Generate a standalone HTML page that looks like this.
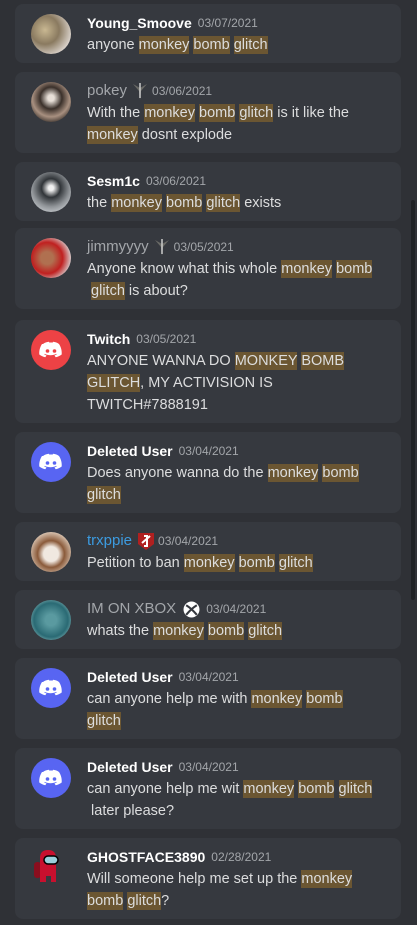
<!DOCTYPE html>
<html><head><meta charset="utf-8"><style>
*{margin:0;padding:0;box-sizing:border-box}
body{width:417px;height:925px;background:#2f3136;font-family:"Liberation Sans",sans-serif;position:relative;overflow:hidden}
.card{position:absolute;left:15px;width:386px;background:#36393f;border-radius:8px;padding:8px 0 7px 72px}
.av{position:absolute;left:16px;top:10px;width:40px;height:40px;border-radius:50%;overflow:hidden}
.hd{line-height:22px;height:22px;white-space:nowrap;display:flex;align-items:center}
.n{font-size:14px;font-weight:bold;color:#fff}
.g{color:#a3a6aa;font-weight:normal;font-size:15px}
.b{color:#3c9be0;font-weight:normal;font-size:15px}
.d{font-size:12px;color:#a3a6aa;margin-left:6px}
.m{font-size:14.5px;line-height:22px;color:#dcddde;white-space:nowrap}
.h{background:#6b5632;padding:1px 0}
.bd{margin-left:5px;display:inline-block}
.sb{position:absolute;left:411px;top:200px;width:4px;height:400px;background:#202225;border-radius:2px}
</style></head><body>
<div class="sb"></div>

<div class="card" style="top:4px;height:59px">
<div class="av" style="background:radial-gradient(circle at 35% 40%,#c9b892,#8a7a60 40%,#d8d0c8 75%)"></div>
<div class="hd"><span class="n">Young_Smoove</span><span class="d">03/07/2021</span></div>
<div class="m">anyone <span class="h">monkey</span> <span class="h">bomb</span> <span class="h">glitch</span></div></div>

<div class="card" style="top:72px;height:81px">
<div class="av" style="background:radial-gradient(circle at 50% 40%,#e8e0d8 10%,#3a302a 35%,#a89080 60%,#2a2420 85%)"></div>
<div class="hd"><span class="n g">pokey</span><svg class="bd" width="16" height="18" viewBox="0 0 16 18"><path d="M1 2L8 6 15 2 9 9 8 18 7 9Z" fill="#6a6a66"/><path d="M8 1V16" stroke="#ccc" stroke-width="1.5"/></svg><span class="d" style="margin-left:4px">03/06/2021</span></div>
<div class="m">With the <span class="h">monkey</span> <span class="h">bomb</span> <span class="h">glitch</span> is it like the<br><span class="h">monkey</span> dosnt explode</div></div>

<div class="card" style="top:162px;height:59px">
<div class="av" style="background:radial-gradient(circle at 50% 40%,#f0f0f0 8%,#303438 30%,#909498 60%,#c8ccd0 85%)"></div>
<div class="hd"><span class="n">Sesm1c</span><span class="d">03/06/2021</span></div>
<div class="m">the <span class="h">monkey</span> <span class="h">bomb</span> <span class="h">glitch</span> exists</div></div>

<div class="card" style="top:228px;height:81px">
<div class="av" style="background:radial-gradient(circle at 40% 50%,#b07050 20%,#c02020 50%,#d8d8d8 80%)"></div>
<div class="hd"><span class="n g">jimmyyyy</span><svg class="bd" width="16" height="18" viewBox="0 0 16 18"><path d="M1 2L8 6 15 2 9 9 8 18 7 9Z" fill="#6a6a66"/><path d="M8 1V16" stroke="#ccc" stroke-width="1.5"/></svg><span class="d" style="margin-left:4px">03/05/2021</span></div>
<div class="m">Anyone know what this whole <span class="h">monkey</span> <span class="h">bomb</span><br>&nbsp;<span class="h">glitch</span> is about?</div></div>

<div class="card" style="top:320px;height:103px">
<div class="av" style="background:#ed4245"><svg width="40" height="40" viewBox="0 0 40 40"><path d="M12 14c2-1.5 4-2 6-2.2l.4.8c1-.2 2.2-.2 3.2 0l.4-.8c2 .2 4 .7 6 2.2 2 3 3 6.5 2.7 10.5-2 1.5-4 2.3-6 2.8l-1.2-1.8c.9-.3 1.7-.7 2.4-1.2-.2-.1-.4-.3-.6-.4-3.8 1.8-7.8 1.8-11.6 0-.2.1-.4.3-.6.4.7.5 1.5.9 2.4 1.2l-1.2 1.8c-2-.5-4-1.3-6-2.8-.3-4 .7-7.5 2.7-10.5z" fill="#fff"/><circle cx="16.5" cy="21" r="1.8" fill="#ed4245"/><circle cx="23.5" cy="21" r="1.8" fill="#ed4245"/></svg></div>
<div class="hd"><span class="n">Twitch</span><span class="d">03/05/2021</span></div>
<div class="m">ANYONE WANNA DO <span class="h">MONKEY</span> <span class="h">BOMB</span><br><span class="h">GLITCH</span>, MY ACTIVISION IS<br>TWITCH#7888191</div></div>

<div class="card" style="top:432px;height:81px">
<div class="av" style="background:#5865f2"><svg width="40" height="40" viewBox="0 0 40 40"><path d="M12 14c2-1.5 4-2 6-2.2l.4.8c1-.2 2.2-.2 3.2 0l.4-.8c2 .2 4 .7 6 2.2 2 3 3 6.5 2.7 10.5-2 1.5-4 2.3-6 2.8l-1.2-1.8c.9-.3 1.7-.7 2.4-1.2-.2-.1-.4-.3-.6-.4-3.8 1.8-7.8 1.8-11.6 0-.2.1-.4.3-.6.4.7.5 1.5.9 2.4 1.2l-1.2 1.8c-2-.5-4-1.3-6-2.8-.3-4 .7-7.5 2.7-10.5z" fill="#fff"/><circle cx="16.5" cy="21" r="1.8" fill="#5865f2"/><circle cx="23.5" cy="21" r="1.8" fill="#5865f2"/></svg></div>
<div class="hd"><span class="n">Deleted User</span><span class="d">03/04/2021</span></div>
<div class="m">Does anyone wanna do the <span class="h">monkey</span> <span class="h">bomb</span><br><span class="h">glitch</span></div></div>

<div class="card" style="top:522px;height:59px">
<div class="av" style="background:radial-gradient(circle at 50% 55%,#f0e8e0 25%,#8a5a3a 45%,#e8d8c8 80%)"></div>
<div class="hd"><span class="n b">trxppie</span><svg class="bd" width="18" height="20" viewBox="0 0 18 20"><path d="M1 2H17V13L9 19 1 13Z" fill="#b02020"/><path d="M5 12L13 5M7 5H10V15H7" stroke="#fff" stroke-width="2" fill="none"/></svg><span class="d" style="margin-left:3px">03/04/2021</span></div>
<div class="m">Petition to ban <span class="h">monkey</span> <span class="h">bomb</span> <span class="h">glitch</span></div></div>

<div class="card" style="top:590px;height:59px">
<div class="av" style="background:radial-gradient(circle at 50% 50%,#5a9aa0 20%,#2a6a74 60%,#9ac8c8 90%)"></div>
<div class="hd"><span class="n g">IM ON XBOX</span><svg class="bd" width="17" height="17" viewBox="0 0 16 16" style="margin-left:7px"><circle cx="8" cy="8" r="7.5" fill="#fff"/><path d="M3 4Q8 7 13 13M13 4Q8 7 3 13" stroke="#36393f" stroke-width="2" fill="none"/></svg><span class="d" style="margin-left:6px">03/04/2021</span></div>
<div class="m">whats the <span class="h">monkey</span> <span class="h">bomb</span> <span class="h">glitch</span></div></div>

<div class="card" style="top:658px;height:81px">
<div class="av" style="background:#5865f2"><svg width="40" height="40" viewBox="0 0 40 40"><path d="M12 14c2-1.5 4-2 6-2.2l.4.8c1-.2 2.2-.2 3.2 0l.4-.8c2 .2 4 .7 6 2.2 2 3 3 6.5 2.7 10.5-2 1.5-4 2.3-6 2.8l-1.2-1.8c.9-.3 1.7-.7 2.4-1.2-.2-.1-.4-.3-.6-.4-3.8 1.8-7.8 1.8-11.6 0-.2.1-.4.3-.6.4.7.5 1.5.9 2.4 1.2l-1.2 1.8c-2-.5-4-1.3-6-2.8-.3-4 .7-7.5 2.7-10.5z" fill="#fff"/><circle cx="16.5" cy="21" r="1.8" fill="#5865f2"/><circle cx="23.5" cy="21" r="1.8" fill="#5865f2"/></svg></div>
<div class="hd"><span class="n">Deleted User</span><span class="d">03/04/2021</span></div>
<div class="m">can anyone help me with <span class="h">monkey</span> <span class="h">bomb</span><br><span class="h">glitch</span></div></div>

<div class="card" style="top:748px;height:81px">
<div class="av" style="background:#5865f2"><svg width="40" height="40" viewBox="0 0 40 40"><path d="M12 14c2-1.5 4-2 6-2.2l.4.8c1-.2 2.2-.2 3.2 0l.4-.8c2 .2 4 .7 6 2.2 2 3 3 6.5 2.7 10.5-2 1.5-4 2.3-6 2.8l-1.2-1.8c.9-.3 1.7-.7 2.4-1.2-.2-.1-.4-.3-.6-.4-3.8 1.8-7.8 1.8-11.6 0-.2.1-.4.3-.6.4.7.5 1.5.9 2.4 1.2l-1.2 1.8c-2-.5-4-1.3-6-2.8-.3-4 .7-7.5 2.7-10.5z" fill="#fff"/><circle cx="16.5" cy="21" r="1.8" fill="#5865f2"/><circle cx="23.5" cy="21" r="1.8" fill="#5865f2"/></svg></div>
<div class="hd"><span class="n">Deleted User</span><span class="d">03/04/2021</span></div>
<div class="m">can anyone help me wit <span class="h">monkey</span> <span class="h">bomb</span> <span class="h">glitch</span><br>&nbsp;later please?</div></div>

<div class="card" style="top:838px;height:81px">
<div class="av" style="border-radius:0"><svg width="40" height="40" viewBox="0 0 40 40"><rect x="3" y="14" width="7" height="16" rx="3" fill="#8a0e1e"/><path d="M9 10Q9 2 17 2Q25 2 25 10V34H20V28H15V34H9Z" fill="#c8102e"/><rect x="13" y="8" width="14" height="8" rx="4" fill="#9ad0dc" stroke="#000" stroke-width="1.5"/></svg></div>
<div class="hd"><span class="n">GHOSTFACE3890</span><span class="d">02/28/2021</span></div>
<div class="m">Will someone help me set up the <span class="h">monkey</span><br><span class="h">bomb</span> <span class="h">glitch</span>?</div></div>
</body></html>
